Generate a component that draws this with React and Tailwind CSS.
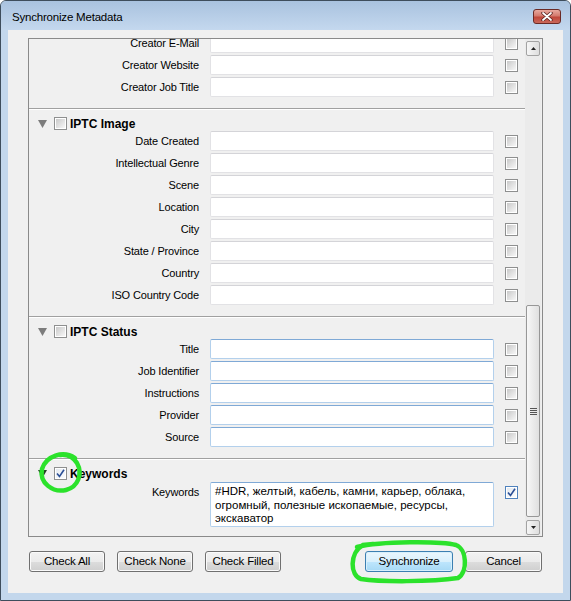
import React from "react";

const creator = ["Creator E-Mail", "Creator Website", "Creator Job Title"];
const image = [
  "Date Created",
  "Intellectual Genre",
  "Scene",
  "Location",
  "City",
  "State / Province",
  "Country",
  "ISO Country Code",
];
const status = ["Title", "Job Identifier", "Instructions", "Provider", "Source"];

function Box({ checked, blue }) {
  return (
    <div
      className={`w-[13px] h-[13px] shrink-0 border bg-white p-[1px] flex ${
        blue ? "border-[#4f82bd]" : "border-[#8e8f8f]"
      }`}
    >
      <div
        className={`flex-1 flex items-center justify-center ${
          checked
            ? "bg-[linear-gradient(135deg,#e4e9ef,#fbfcfd)]"
            : "bg-[linear-gradient(135deg,#c9c9c9,#f7f7f7)]"
        }`}
      >
        {checked && (
          <svg width="9" height="9" viewBox="0 0 9 9">
            <path d="M1 4.5 L3.5 7.5 L8 0.8" fill="none" stroke="#2b4f96" strokeWidth="1.6" />
          </svg>
        )}
      </div>
    </div>
  );
}

function Field({ blue }) {
  return (
    <div
      className={`w-[284px] h-[20px] shrink-0 bg-white rounded-[2px] border ${
        blue
          ? "border-[#b3d0ec] border-t-[#7fa9d6]"
          : "border-[#e2e2e5] border-t-[#d4d4d8]"
      }`}
    />
  );
}

function Row({ label, blue }) {
  return (
    <div className="flex items-center h-[20px]">
      <div className="w-[170px] text-right text-[11px] tracking-[-0.15px] text-black whitespace-nowrap">
        {label}
      </div>
      <div className="ml-[11px]">
        <Field blue={blue} />
      </div>
      <div className="ml-[11px]">
        <Box />
      </div>
    </div>
  );
}

function Divider() {
  return <div className="h-[2px] border-t border-[#a0a0a0] bg-white" />;
}

function Header({ title, checked, dark }) {
  return (
    <div className="h-[21px] pt-[6px] pl-[9px] flex items-center">
      <svg width="9" height="8" viewBox="0 0 9 8">
        <polygon points="0,0 9,0 4.5,8" fill={dark ? "#244424" : "#7c7c7c"} />
      </svg>
      <div className="ml-[7px]">
        <Box checked={checked} />
      </div>
      <span className="ml-[3px] text-[12px] font-bold text-black">{title}</span>
    </div>
  );
}

function Btn({ children, primary, w }) {
  return (
    <div
      className={`${w} h-[21px] rounded-[3px] border flex items-center justify-center text-[11.5px] tracking-[-0.2px] text-black ${
        primary
          ? "border-[#3c7fb1] bg-[linear-gradient(#eaf6fd_0%,#d9f0fc_50%,#bee6fd_51%,#a7d9f5_100%)] shadow-[inset_0_0_0_1px_#d8f0fc]"
          : "border-[#707070] bg-[linear-gradient(#f2f2f2_0%,#ebebeb_50%,#dddddd_51%,#cfcfcf_100%)] shadow-[inset_0_0_0_1px_#fafafa]"
      }`}
    >
      {children}
    </div>
  );
}

function ScrollBtn({ up }) {
  return (
    <div className="ml-[1px] w-[14px] h-[15px] rounded-[2px] border border-[#a3a3a3] bg-[linear-gradient(90deg,#f6f6f6,#dedede)] flex items-center justify-center">
      <svg width="5" height="3" viewBox="0 0 5 3">
        <polygon points={up ? "2.5,0 5,3 0,3" : "0,0 5,0 2.5,3"} fill="#222" />
      </svg>
    </div>
  );
}

export default function App() {
  return (
    <div className="relative w-[571px] h-[601px] flex flex-col border border-[#3e4d5c] rounded-t-[6px] bg-[#c3d7ec] font-['Liberation_Sans',Arial,sans-serif] overflow-hidden">
      <div className="h-[29px] shrink-0 flex items-center justify-between pl-[11px] pr-[9px] pt-[5px] bg-[linear-gradient(#a9c2df,#c4d8ee)]">
        <span className="text-[11.5px] tracking-[-0.2px] text-black">Synchronize Metadata</span>
        <div className="-mt-[4px] w-[28px] h-[15px] rounded-[3px] border border-[#6b2a25] bg-[linear-gradient(#e8a99f_0%,#d47a6d_45%,#c0473a_55%,#c9685a_100%)] flex items-center justify-center">
          <svg width="12" height="9" viewBox="0 0 12 9">
            <path d="M2 1 L10 8 M10 1 L2 8" stroke="#5a2420" strokeWidth="3.4" strokeLinecap="round" />
            <path d="M2 1 L10 8 M10 1 L2 8" stroke="#ffffff" strokeWidth="1.8" strokeLinecap="round" />
          </svg>
        </div>
      </div>

      <div className="mx-[7px] mb-[7px] flex-1 bg-[#f0f0f0] px-[20px] pt-[8px] flex flex-col">
        <div className="h-[499px] border border-[#8a8a8a] flex">
          <div className="w-[496px] overflow-hidden">
            <div className="-mt-[6px]">
              <div className="flex flex-col gap-[2px] pb-[11px]">
                {creator.map((l) => (
                  <Row key={l} label={l} />
                ))}
              </div>
              <Divider />
              <Header title="IPTC Image" />
              <div className="flex flex-col gap-[2px] pb-[11px]">
                {image.map((l) => (
                  <Row key={l} label={l} />
                ))}
              </div>
              <Divider />
              <Header title="IPTC Status" />
              <div className="flex flex-col gap-[2px] pb-[11px]">
                {status.map((l) => (
                  <Row key={l} label={l} blue />
                ))}
              </div>
              <Divider />
              <Header title="Keywords" checked dark />
              <div className="flex items-start mt-[1px]">
                <div className="w-[170px] text-right text-[11px] tracking-[-0.15px] text-black pt-[2px]">
                  Keywords
                </div>
                <div className="ml-[11px] w-[284px] h-[45px] bg-white rounded-[2px] border border-[#b3d0ec] border-t-[#7fa9d6] px-[4px] pt-[2px] text-[11.5px] leading-[13.5px] text-black">
                  #HDR, желтый, кабель, камни, карьер, облака, огромный, полезные ископаемые, ресурсы, экскаватор
                </div>
                <div className="ml-[11px] mt-[4px]">
                  <Box checked blue />
                </div>
              </div>
            </div>
          </div>
          <div className="w-[16px] bg-[#ebebeb] flex flex-col pt-[2px] pb-[1px]">
            <ScrollBtn up />
            <div className="flex-1 flex flex-col justify-end pb-[3px]">
              <div className="ml-[1px] w-[14px] h-[212px] rounded-[2px] border border-[#979797] bg-[linear-gradient(90deg,#f7f7f7,#e0e0e0)] flex items-center justify-center">
                <div className="flex flex-col gap-[1px]">
                  <div className="w-[7px] h-[1px] bg-[#555]" />
                  <div className="w-[7px] h-[1px] bg-[#555]" />
                  <div className="w-[7px] h-[1px] bg-[#555]" />
                  <div className="w-[7px] h-[1px] bg-[#555]" />
                </div>
              </div>
            </div>
            <ScrollBtn />
          </div>
        </div>

        <div className="mt-[14px] px-[1px] flex items-center">
          <div className="flex gap-[12px]">
            <Btn w="w-[76px]">Check All</Btn>
            <Btn w="w-[76px]">Check None</Btn>
            <Btn w="w-[76px]">Check Filled</Btn>
          </div>
          <div className="ml-auto flex gap-[12px]">
            <Btn w="w-[88px]" primary>
              Synchronize
            </Btn>
            <Btn w="w-[77px]">Cancel</Btn>
          </div>
        </div>
      </div>

      <svg
        className="absolute left-0 top-0 pointer-events-none"
        width="571"
        height="601"
        viewBox="0 0 571 601"
      >
        <path
          d="M74 457 C62 449 45 455 41 468 C38 482 52 492 65 489 C77 486 82 473 76 462 C72 456 66 453 59 454"
          fill="none"
          stroke="#2be22b"
          strokeWidth="4.5"
          strokeLinecap="round"
        />
        <path
          d="M356 546 C380 540 440 540 455 544 C466 548 467 571 457 577 C430 581 380 581 360 578 C349 575 348 552 362 544 L372 543"
          fill="none"
          stroke="#2be22b"
          strokeWidth="4.5"
          strokeLinecap="round"
        />
      </svg>
    </div>
  );
}
